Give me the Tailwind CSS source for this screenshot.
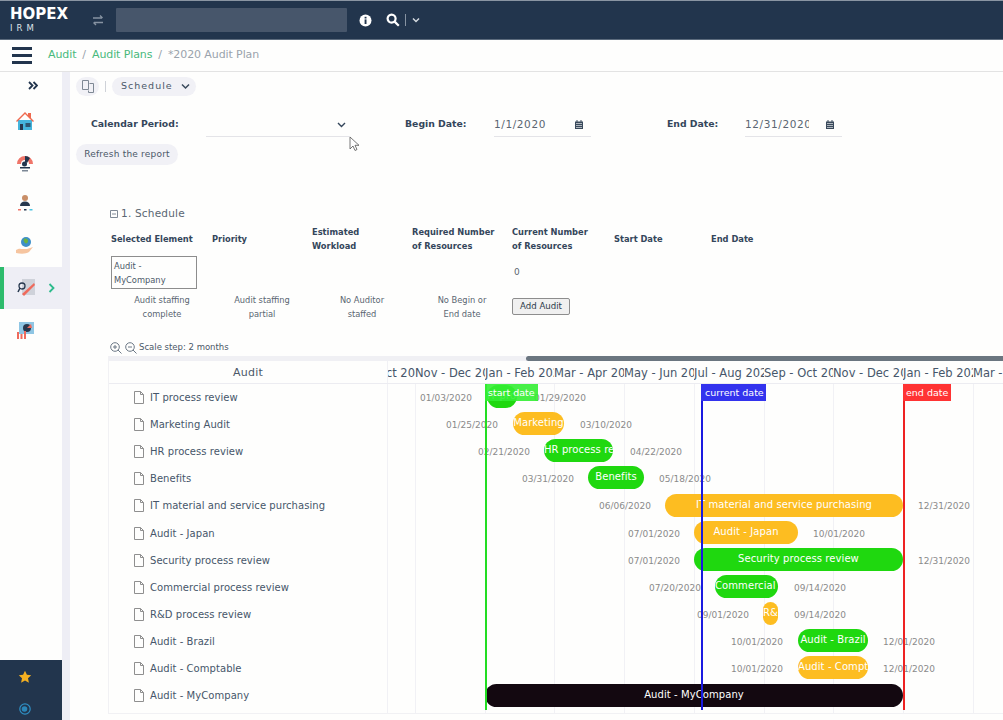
<!DOCTYPE html>
<html lang="en">
<head>
<meta charset="utf-8">
<title>2020 Audit Plan</title>
<script src="https://cdn.jsdelivr.net/npm/@tailwindcss/browser@4"></script>
</head>
<body class="w-[1003px] h-[720px] overflow-hidden bg-[#fefefd] font-['DejaVu_Sans',sans-serif] text-[#3f4d5f]">
<header class="h-10 bg-[#22354d] border-t border-[#8a95a3] border-b border-b-[#5c6b7d] flex items-center">
  <div class="w-[92px] pl-[10px] text-white leading-none">
    <div class="text-[15px] font-semibold tracking-[0px] leading-[15px]">HOPEX</div>
    <div class="text-[8.500px] tracking-[4px] text-[#dfe3e8] leading-[10px] mt-[1px]">IRM</div>
  </div>
  <svg class="w-3 h-3 text-[#8793a2]" viewBox="0 0 12 12" fill="none" stroke="currentColor" stroke-width="1.4"><path d="M1 4h9M8 1.500 10.500 4M11 8.500H2M4 11 1.500 8.500"/></svg>
  <div class="ml-3 w-[231px] h-6 bg-[#47566b] rounded-[1px]"></div>
  <svg class="ml-3 w-[13px] h-[13px]" viewBox="0 0 13 13"><circle cx="6.500" cy="6.500" r="6" fill="#fff"/><rect x="5.600" y="5.400" width="1.900" height="4.600" fill="#22354d"/><rect x="5.600" y="2.800" width="1.900" height="1.700" fill="#22354d"/></svg>
  <svg class="ml-[14px] w-[14px] h-[14px]" viewBox="0 0 14 14" fill="none" stroke="#fff" stroke-width="2.200"><circle cx="5.600" cy="5.600" r="4"/><path d="m8.600 8.600 4.200 4.200"/></svg>
  <div class="ml-[5px] w-px h-3 bg-[#8793a2]"></div>
  <svg class="ml-[6px] w-2 h-2" viewBox="0 0 8 8" fill="none" stroke="#d5dae0" stroke-width="1.500"><path d="m1 2.500 3 3 3-3"/></svg>
</header>

<nav class="h-[32px] border-b border-[#e3e3e3] flex items-center">
  <div class="ml-3 w-[20px] flex flex-col gap-[4px]">
    <div class="h-[3px] bg-[#22354d]"></div><div class="h-[3px] bg-[#22354d]"></div><div class="h-[3px] bg-[#22354d]"></div>
  </div>
  <div class="ml-4 text-[11px] tracking-[-0.1px] text-[#9aa3ac] flex gap-[6px]">
    <span class="text-[#48b97c]">Audit</span><span>/</span><span class="text-[#48b97c]">Audit Plans</span><span>/</span><span>*2020 Audit Plan</span>
  </div>
</nav>

<div class="flex h-[648px]">
  <aside class="w-[70px] shrink-0 border-r-8 border-[#eeeef5] flex flex-col">
    <div class="h-[28px] pt-[9px] pl-[28px] flex items-start">
      <svg class="w-[10px] h-[9px]" viewBox="0 0 10 9" fill="none" stroke="#22354d" stroke-width="1.800"><path d="m1 1 3.500 3.500L1 8M5.500 1 9 4.500 5.500 8"/></svg>
    </div>
    <div class="h-[41.800px] pl-[15px] flex items-center">
      <svg class="w-5 h-5" viewBox="0 0 20 20"><path d="M3 9h14v10H3z" fill="#45b5dd"/><path d="M1 10 10 1l3 3V2h3v5l3 3-1 1-8-8-8 8z" fill="#ef6a4f"/><rect x="5" y="13" width="3" height="6" fill="#27384e"/><rect x="10.500" y="12" width="5" height="4" fill="#27384e" opacity=".75"/></svg>
    </div>
    <div class="h-[41.800px] pl-[15px] flex items-center">
      <svg class="w-5 h-5" viewBox="0 0 20 20"><path d="M2 11a8 8 0 0 1 16 0h-4a4 4 0 0 0-8 0z" fill="#ef7569"/><path d="M10 3a8 8 0 0 1 5 2l-3 5-2-1z" fill="#22354d"/><circle cx="9.500" cy="11" r="2.500" fill="#22354d"/><rect x="5" y="14" width="10" height="1.500" fill="#22354d"/><rect x="7" y="17" width="6" height="1.500" fill="#7c8896"/></svg>
    </div>
    <div class="h-[41.800px] pl-[15px] flex items-center">
      <svg class="w-5 h-5" viewBox="0 0 20 20"><circle cx="10" cy="4" r="3" fill="#c98f68"/><path d="M5 12c0-3 2-4.500 5-4.500s5 1.500 5 4.500z" fill="#27384e"/><path d="M3 15h3v1.500H3z" fill="#ef7569"/><path d="M9 15h2.500v1.500H9z" fill="#27384e"/><path d="M14.500 15h3v1.500h-3z" fill="#4ac3e0"/></svg>
    </div>
    <div class="h-[41.800px] pl-[15px] flex items-center">
      <svg class="w-5 h-5" viewBox="0 0 20 20"><circle cx="11" cy="6" r="5" fill="#3d8fc9"/><path d="M9 3c2-1 4 0 4 2s-2 3-3 2-2-3-1-4z" fill="#6db33f"/><path d="M1 14c3-2 5-1 7-1h4l6-2-4 5c-3 2-8 2-13 1z" fill="#f6c5a0"/></svg>
    </div>
    <div class="h-[41.800px] bg-[#eeeef5] -mr-2 border-l-4 border-[#2dbb6c] flex items-center">
      <svg class="ml-[13px] w-5 h-5" viewBox="0 0 20 20"><rect x="5" y="1" width="13" height="16" fill="#cfd2da"/><path d="M5 16 17 5l1 2L7 18z" fill="#ef6a5c"/><circle cx="5" cy="8" r="3" fill="none" stroke="#27384e" stroke-width="1.300"/><path d="m3 10-2 4" stroke="#27384e" stroke-width="1.500"/></svg>
      <svg class="ml-[11px] w-[7px] h-[10px]" viewBox="0 0 7 10" fill="none" stroke="#2dbb8c" stroke-width="1.800"><path d="m1.500 1 4 4-4 4"/></svg>
    </div>
    <div class="h-[41.800px] pl-[15px] flex items-center">
      <svg class="w-5 h-5" viewBox="0 0 20 20"><rect x="4" y="2" width="15" height="12" fill="#8fc6e4"/><circle cx="12" cy="8" r="4" fill="#27384e"/><path d="M12 8l4-4 1 4z" fill="#ef6a5c"/><path d="M2 12h2v7H2zM5.500 14h2v5h-2zM9 11h2v8H9z" fill="#ef6a5c"/></svg>
    </div>
    <div class="mt-auto h-[60px] bg-[#22354d] flex flex-col items-start pl-[18px] pt-[10px]">
      <svg class="w-[14px] h-[14px]" viewBox="0 0 14 14"><path d="m7 .8 1.900 4 4.300.5-3.200 3 .9 4.400L7 10.500l-3.900 2.200.9-4.400-3.200-3 4.300-.5z" fill="#f5b021"/></svg>
      <svg class="mt-[19px] ml-px w-3 h-3" viewBox="0 0 12 12" fill="none"><circle cx="6" cy="6" r="5.200" stroke="#2f8fc4" stroke-width="1.200"/><circle cx="5.500" cy="6" r="2.800" fill="#2b86b8"/></svg>
    </div>
  </aside>

  <main class="flex-1 min-w-0 relative">
    <div class="h-[31px] pt-[5px] pl-[6px] flex items-start">
      <div class="w-[23px] h-[19px] rounded-full bg-[#f1f1f6] flex items-center justify-center">
        <svg class="w-3 h-[13px]" viewBox="0 0 12 13" fill="none" stroke="#7e8894" stroke-width="1"><path d="M.5.500h6v9h-6zM7.500 3.500h4v9h-5v-2"/></svg>
      </div>
      <div class="ml-[6px] mt-[4px] w-px h-[11px] bg-[#cfd2d8]"></div>
      <div class="ml-[6px] w-[84px] h-[19px] rounded-full bg-[#f1f1f6] flex items-center pl-[9px] gap-[8px]">
        <span class="text-[9.500px] tracking-[1px] text-[#4b5868]">Schedule</span>
        <svg class="w-[9px] h-[7px]" viewBox="0 0 9 7" fill="none" stroke="#3a4a5c" stroke-width="1.500"><path d="m1 1.500 3.500 3.500L8 1.500"/></svg>
      </div>
    </div>

    <div class="h-[41px] relative flex items-start pt-[15px] text-[9.300px] font-bold text-[#34465b]">
      <span class="ml-[21px] w-[115px] -mt-px">Calendar Period:</span>
      <div class="w-[144px] h-[21px] -mt-[2px] pb-[2px] border-b border-[#e4e4e8] flex justify-end items-center pr-[4px]">
        <svg class="w-[9px] h-[6px]" viewBox="0 0 9 6" fill="none" stroke="#34465b" stroke-width="1.400"><path d="m1 1 3.500 3.500L8 1"/></svg>
      </div>
      <span class="ml-[55px] w-[89px] -mt-px">Begin Date:</span>
      <div class="w-[97px] h-[21px] -mt-[2px] pb-[3px] border-b border-[#e4e4e8] flex items-center justify-between pr-[8px] font-normal text-[10.500px] text-[#5a6672]">
        <span class="tracking-[0.6px]">1/1/2020</span>
        <svg class="w-2 h-[9px]" viewBox="0 0 8 9"><path d="M0 1.500h8V9H0z" fill="#3a4a5c"/><path d="M2 0v2M6 0v2" stroke="#3a4a5c"/><path d="M1 3.500h6M1 5.500h6M1 7.500h6" stroke="#fff" stroke-width=".6"/></svg>
      </div>
      <span class="ml-[76px] w-[78px] -mt-px">End Date:</span>
      <div class="w-[97px] h-[21px] -mt-[2px] pb-[3px] border-b border-[#e4e4e8] flex items-center justify-between pr-[8px] font-normal text-[10.500px] text-[#5a6672]">
        <span class="w-[64px] overflow-hidden whitespace-nowrap tracking-[0.6px]">12/31/2020</span>
        <svg class="w-2 h-[9px]" viewBox="0 0 8 9"><path d="M0 1.500h8V9H0z" fill="#3a4a5c"/><path d="M2 0v2M6 0v2" stroke="#3a4a5c"/><path d="M1 3.500h6M1 5.500h6M1 7.500h6" stroke="#fff" stroke-width=".6"/></svg>
      </div>
    </div>

    <div class="pl-[6px] h-[62px]">
      <div class="w-[102px] h-[21px] rounded-full bg-[#f1f1f6] flex items-center justify-center text-[9px] tracking-[0.2px] text-[#4b5868]">Refresh the report</div>
    </div>

    <svg class="absolute left-[279px] top-[64px] w-3 h-[16px] z-10" viewBox="0 0 12 16"><path d="M1 1v12l3-3 2 4.500 2-1-2-4.200h4z" fill="#fff" stroke="#555" stroke-width=".8"/></svg>

    <div class="ml-[40px] flex items-center gap-[3px] h-[16px] text-[10.500px] text-[#5a6672]">
      <svg class="w-[8px] h-[8px]" viewBox="0 0 8 8" fill="none" stroke="#808a96"><path d="M.5.500h7v7h-7zM2 4h4"/></svg>
      <span class="tracking-[0.2px]">1. Schedule</span>
    </div>

    <div class="ml-[41px] mt-[2px] grid grid-cols-[101px_100px_100px_100px_102px_97px_100px] text-[8.300px] font-bold leading-[14px] text-[#34465b] h-[29px] items-center">
      <span>Selected Element</span><span>Priority</span><span>Estimated<br>Workload</span><span>Required Number<br>of Resources</span><span>Current Number<br>of Resources</span><span>Start Date</span><span>End Date</span>
    </div>

    <div class="ml-[41px] mt-[2px] h-[35px] flex items-center">
      <div class="w-[86px] h-[33px] border border-[#8d8d8d] pl-[2px] text-[8.300px] leading-[14px] text-[#4b5868] pt-[2px]">Audit -<br>MyCompany</div>
      <span class="ml-[317px] text-[9px] text-[#5a6672]">0</span>
    </div>

    <div class="ml-[41px] mt-[1px] h-[32px] flex items-center">
      <div class="grid grid-cols-[100px_100px_100px_100px] text-center text-[8.300px] leading-[14px] text-[#5a6672] w-[401px] -ml-[3px]">
        <span class="pl-[8px]">Audit staffing<br>complete</span><span class="pl-[8px]">Audit staffing<br>partial</span><span class="pl-[8px]">No Auditor<br>staffed</span><span class="pl-[8px]">No Begin or<br>End date</span>
      </div>
      <div class="ml-[3px] -mt-[2px] w-[58px] h-[17px] border border-[#8d8d8d] rounded-[2px] bg-[#f0f0f0] flex items-center justify-center text-[8.600px] text-[#2c3a4a]">Add Audit</div>
    </div>

    <div class="ml-[40px] mt-[16px] h-[17px] flex items-center text-[8.500px] text-[#4b5868]">
      <svg class="w-3 h-3" viewBox="0 0 12 12" fill="none" stroke="#6c7886"><circle cx="5" cy="5" r="4.300"/><path d="m8 8 3.500 3.500M3 5h4M5 3v4"/></svg>
      <svg class="ml-[3px] w-3 h-3" viewBox="0 0 12 12" fill="none" stroke="#6c7886"><circle cx="5" cy="5" r="4.300"/><path d="m8 8 3.500 3.500M3 5h4"/></svg>
      <span class="ml-[2px]">Scale step: 2 months</span>
    </div>

    <div class="ml-[38px] border-l border-b border-[#f1f1f4] h-[358px]">
      <div class="h-[5px] bg-[#f0f0f4] flex justify-end"><div class="w-[477px] h-full bg-[#6b7680] rounded-l-full"></div></div>
      <div class="flex h-[23px] border-b border-[#ececf1]">
        <div class="w-[279px] shrink-0 border-r border-[#f1f1f5] text-center text-[11px] leading-[24px] tracking-[0.2px] text-[#4b5868]">Audit</div>
        <div class="flex-1 overflow-hidden flex whitespace-nowrap text-[11.500px] leading-[24px] text-[#46566a]">
          <div class="w-[27px] shrink-0 overflow-hidden flex justify-end"><span>ct 20</span></div>
          <div class="w-[70px] shrink-0 overflow-hidden">Nov - Dec 2019</div>
          <div class="w-[69px] shrink-0 overflow-hidden">Jan - Feb 2020</div>
          <div class="w-[70px] shrink-0 overflow-hidden">Mar - Apr 2020</div>
          <div class="w-[70px] shrink-0 overflow-hidden">May - Jun 2020</div>
          <div class="w-[70px] shrink-0 overflow-hidden">Jul - Aug 2020</div>
          <div class="w-[69px] shrink-0 overflow-hidden">Sep - Oct 2020</div>
          <div class="w-[70px] shrink-0 overflow-hidden">Nov - Dec 2020</div>
          <div class="w-[70px] shrink-0 overflow-hidden">Jan - Feb 2021</div>
          <div class="w-[30px] shrink-0 overflow-hidden">Mar - Apr</div>
        </div>
      </div>
      <div class="flex h-[329px]">
        <div class="w-[279px] shrink-0 border-r border-[#f1f1f5] text-[10px] tracking-[0.05px] text-[#46566a]">
          <div class="h-[27.100px] flex items-center pl-[25px] gap-[6px]"><svg class="w-[10px] h-[13px]" viewBox="0 0 10 13" fill="none" stroke="#8f8f8f"><path d="M.5.500h6l3 3v9h-9zM6.500.500v3h3"/></svg>IT process review</div>
          <div class="h-[27.100px] flex items-center pl-[25px] gap-[6px]"><svg class="w-[10px] h-[13px]" viewBox="0 0 10 13" fill="none" stroke="#8f8f8f"><path d="M.5.500h6l3 3v9h-9zM6.500.500v3h3"/></svg>Marketing Audit</div>
          <div class="h-[27.100px] flex items-center pl-[25px] gap-[6px]"><svg class="w-[10px] h-[13px]" viewBox="0 0 10 13" fill="none" stroke="#8f8f8f"><path d="M.5.500h6l3 3v9h-9zM6.500.500v3h3"/></svg>HR process review</div>
          <div class="h-[27.100px] flex items-center pl-[25px] gap-[6px]"><svg class="w-[10px] h-[13px]" viewBox="0 0 10 13" fill="none" stroke="#8f8f8f"><path d="M.5.500h6l3 3v9h-9zM6.500.500v3h3"/></svg>Benefits</div>
          <div class="h-[27.100px] flex items-center pl-[25px] gap-[6px]"><svg class="w-[10px] h-[13px]" viewBox="0 0 10 13" fill="none" stroke="#8f8f8f"><path d="M.5.500h6l3 3v9h-9zM6.500.500v3h3"/></svg>IT material and service purchasing</div>
          <div class="h-[27.100px] flex items-center pl-[25px] gap-[6px]"><svg class="w-[10px] h-[13px]" viewBox="0 0 10 13" fill="none" stroke="#8f8f8f"><path d="M.5.500h6l3 3v9h-9zM6.500.500v3h3"/></svg>Audit - Japan</div>
          <div class="h-[27.100px] flex items-center pl-[25px] gap-[6px]"><svg class="w-[10px] h-[13px]" viewBox="0 0 10 13" fill="none" stroke="#8f8f8f"><path d="M.5.500h6l3 3v9h-9zM6.500.500v3h3"/></svg>Security process review</div>
          <div class="h-[27.100px] flex items-center pl-[25px] gap-[6px]"><svg class="w-[10px] h-[13px]" viewBox="0 0 10 13" fill="none" stroke="#8f8f8f"><path d="M.5.500h6l3 3v9h-9zM6.500.500v3h3"/></svg>Commercial process review</div>
          <div class="h-[27.100px] flex items-center pl-[25px] gap-[6px]"><svg class="w-[10px] h-[13px]" viewBox="0 0 10 13" fill="none" stroke="#8f8f8f"><path d="M.5.500h6l3 3v9h-9zM6.500.500v3h3"/></svg>R&amp;D process review</div>
          <div class="h-[27.100px] flex items-center pl-[25px] gap-[6px]"><svg class="w-[10px] h-[13px]" viewBox="0 0 10 13" fill="none" stroke="#8f8f8f"><path d="M.5.500h6l3 3v9h-9zM6.500.500v3h3"/></svg>Audit - Brazil</div>
          <div class="h-[27.100px] flex items-center pl-[25px] gap-[6px]"><svg class="w-[10px] h-[13px]" viewBox="0 0 10 13" fill="none" stroke="#8f8f8f"><path d="M.5.500h6l3 3v9h-9zM6.500.500v3h3"/></svg>Audit - Comptable</div>
          <div class="h-[27.100px] flex items-center pl-[25px] gap-[6px]"><svg class="w-[10px] h-[13px]" viewBox="0 0 10 13" fill="none" stroke="#8f8f8f"><path d="M.5.500h6l3 3v9h-9zM6.500.500v3h3"/></svg>Audit - MyCompany</div>
        </div>

        <div class="flex-1 relative overflow-hidden text-[9px] text-[#8a8a8a]">
          <div class="absolute top-0 bottom-0 left-[27px] w-px bg-[#f1f1f5]"></div>
          <div class="absolute top-0 bottom-0 left-[97px] w-px bg-[#f1f1f5]"></div>
          <div class="absolute top-0 bottom-0 left-[166px] w-px bg-[#f1f1f5]"></div>
          <div class="absolute top-0 bottom-0 left-[236px] w-px bg-[#f1f1f5]"></div>
          <div class="absolute top-0 bottom-0 left-[306px] w-px bg-[#f1f1f5]"></div>
          <div class="absolute top-0 bottom-0 left-[376px] w-px bg-[#f1f1f5]"></div>
          <div class="absolute top-0 bottom-0 left-[445px] w-px bg-[#f1f1f5]"></div>
          <div class="absolute top-0 bottom-0 left-[515px] w-px bg-[#f1f1f5]"></div>
          <div class="absolute top-0 bottom-0 left-[585px] w-px bg-[#f1f1f5]"></div>

          <div class="absolute left-[32px] top-[8px]">01/03/2020</div>
          <div class="absolute left-[99px] top-[1px] w-[30px] h-[23px] rounded-full bg-[#1fd80f] text-white text-[10px] tracking-[0.08px] leading-[22px] text-center overflow-hidden whitespace-nowrap">IT process review</div>
          <div class="absolute left-[146px] top-[8px]">01/29/2020</div>

          <div class="absolute left-[58px] top-[35px]">01/25/2020</div>
          <div class="absolute left-[125px] top-[28px] w-[51px] h-[23px] rounded-full bg-[#fdbd21] text-white text-[10px] tracking-[0.08px] leading-[22px] text-center overflow-hidden whitespace-nowrap">Marketing</div>
          <div class="absolute left-[192px] top-[35px]">03/10/2020</div>

          <div class="absolute left-[90px] top-[62px]">02/21/2020</div>
          <div class="absolute left-[156px] top-[55px] w-[69px] h-[23px] rounded-full bg-[#1fd80f] text-white text-[10px] tracking-[0.08px] leading-[22px] text-center overflow-hidden whitespace-nowrap">HR process review</div>
          <div class="absolute left-[242px] top-[62px]">04/22/2020</div>

          <div class="absolute left-[134px] top-[89px]">03/31/2020</div>
          <div class="absolute left-[200px] top-[82px] w-[56px] h-[23px] rounded-full bg-[#1fd80f] text-white text-[10px] tracking-[0.08px] leading-[22px] text-center overflow-hidden whitespace-nowrap">Benefits</div>
          <div class="absolute left-[271px] top-[89px]">05/18/2020</div>

          <div class="absolute left-[211px] top-[116px]">06/06/2020</div>
          <div class="absolute left-[277px] top-[110px] w-[238px] h-[23px] rounded-full bg-[#fdbd21] text-white text-[10px] tracking-[0.08px] leading-[22px] text-center overflow-hidden whitespace-nowrap">IT material and service purchasing</div>
          <div class="absolute left-[530px] top-[116px]">12/31/2020</div>

          <div class="absolute left-[240px] top-[144px]">07/01/2020</div>
          <div class="absolute left-[306px] top-[137px] w-[104px] h-[23px] rounded-full bg-[#fdbd21] text-white text-[10px] tracking-[0.08px] leading-[22px] text-center overflow-hidden whitespace-nowrap">Audit - Japan</div>
          <div class="absolute left-[425px] top-[144px]">10/01/2020</div>

          <div class="absolute left-[240px] top-[171px]">07/01/2020</div>
          <div class="absolute left-[306px] top-[164px] w-[209px] h-[23px] rounded-full bg-[#1fd80f] text-white text-[10px] tracking-[0.08px] leading-[22px] text-center overflow-hidden whitespace-nowrap">Security process review</div>
          <div class="absolute left-[530px] top-[171px]">12/31/2020</div>

          <div class="absolute left-[261px] top-[198px]">07/20/2020</div>
          <div class="absolute left-[327px] top-[191px] w-[63px] h-[23px] rounded-full bg-[#1fd80f] text-white text-[10px] tracking-[0.08px] leading-[22px] text-center overflow-hidden whitespace-nowrap">Commercial process review</div>
          <div class="absolute left-[406px] top-[198px]">09/14/2020</div>

          <div class="absolute left-[309px] top-[225px]">09/01/2020</div>
          <div class="absolute left-[375px] top-[218px] w-[15px] h-[23px] rounded-full bg-[#fdbd21] text-white text-[10px] tracking-[0.08px] leading-[22px] text-center overflow-hidden whitespace-nowrap">R&amp;D process review</div>
          <div class="absolute left-[406px] top-[225px]">09/14/2020</div>

          <div class="absolute left-[343px] top-[252px]">10/01/2020</div>
          <div class="absolute left-[410px] top-[245px] w-[70px] h-[23px] rounded-full bg-[#1fd80f] text-white text-[10px] tracking-[0.08px] leading-[22px] text-center overflow-hidden whitespace-nowrap">Audit - Brazil</div>
          <div class="absolute left-[495px] top-[252px]">12/01/2020</div>

          <div class="absolute left-[343px] top-[279px]">10/01/2020</div>
          <div class="absolute left-[410px] top-[272px] w-[70px] h-[23px] rounded-full bg-[#fdbd21] text-white text-[10px] tracking-[0.08px] leading-[22px] text-center overflow-hidden whitespace-nowrap">Audit - Comptable</div>
          <div class="absolute left-[495px] top-[279px]">12/01/2020</div>

          <div class="absolute left-[97px] top-[300px] w-[418px] h-[23px] rounded-full bg-[#130810] text-white text-[10px] tracking-[0.08px] leading-[22px] text-center overflow-hidden whitespace-nowrap">Audit - MyCompany</div>

          <div class="absolute left-[97px] top-0 w-[2px] h-[326px] bg-[#22dd22]"></div>
          <div class="absolute left-[97px] top-0 w-[53px] h-[17px] pl-[3px] bg-[#33ee33]/90 text-white text-[9.500px] leading-[17px]">start date</div>
          <div class="absolute left-[313px] top-0 w-[2px] h-[326px] bg-[#1a1ae0]"></div>
          <div class="absolute left-[313px] top-0 w-[65px] h-[17px] pl-[4px] bg-[#3333ee] text-white text-[9.500px] leading-[17px]">current date</div>
          <div class="absolute left-[515px] top-0 w-[2px] h-[326px] bg-[#ee2222]"></div>
          <div class="absolute left-[515px] top-0 w-[48px] h-[17px] pl-[3px] bg-[#ff3333] text-white text-[9.500px] leading-[17px]">end date</div>
        </div>
      </div>
    </div>
  </main>
</div>
</body>
</html>
